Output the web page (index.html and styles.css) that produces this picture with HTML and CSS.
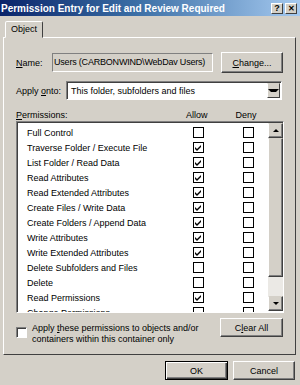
FILE: index.html
```html
<!DOCTYPE html>
<html lang="en">
<head>
    <meta charset="UTF-8">
    <title>Permission Entry for Edit and Review Required</title>
    <link rel="stylesheet" href="styles.css">
</head>
<body>
    <div class="window">
        <div class="titlebar">
            <span class="title">Permission Entry for Edit and Review Required</span>
            <span class="capbtn">?</span>
            <span class="capbtn close">&#x2715;</span>
        </div>

        <div class="tabs">
            <div class="tab">Object</div>
        </div>

        <div class="panel">
            <div class="row name-row">
                <span class="label"><u>N</u>ame:</span>
                <div class="field">Users (CARBONWIND\WebDav Users)</div>
                <button class="btn change"><u>C</u>hange...</button>
            </div>

            <div class="row apply-row">
                <span class="label">Apply <u>o</u>nto:</span>
                <div class="combo">
                    <span>This folder, subfolders and files</span>
                    <span class="combo-arrow"><span class="tri down"></span></span>
                </div>
            </div>

            <div class="perm-head">
                <span class="label"><u>P</u>ermissions:</span>
                <span class="col-head allow">Allow</span>
                <span class="col-head deny">Deny</span>
            </div>

            <div class="listbox">
                <div class="list-items" id="items"></div>
                <div class="scrollbar">
                    <div class="sbtn"><span class="tri up"></span></div>
                    <div class="thumb"></div>
                    <div class="track"></div>
                    <div class="sbtn"><span class="tri down"></span></div>
                </div>
            </div>

            <div class="bottom-row">
                <div class="apply-only">
                    <span class="cb"></span>
                    <span class="apply-text">Apply <u>t</u>hese permissions to objects and/or containers within this container only</span>
                </div>
                <button class="btn clear">C<u>l</u>ear All</button>
            </div>
        </div>

        <div class="footer">
            <button class="btn ok">OK</button>
            <button class="btn cancel">Cancel</button>
        </div>
    </div>

    <script>
        const perms = [
            ['Full Control', false, false],
            ['Traverse Folder / Execute File', true, false],
            ['List Folder / Read Data', true, false],
            ['Read Attributes', true, false],
            ['Read Extended Attributes', true, false],
            ['Create Files / Write Data', true, false],
            ['Create Folders / Append Data', true, false],
            ['Write Attributes', true, false],
            ['Write Extended Attributes', true, false],
            ['Delete Subfolders and Files', false, false],
            ['Delete', false, false],
            ['Read Permissions', true, false],
            ['Change Permissions', false, false]
        ];
        const items = document.getElementById('items');
        const check = '<svg width="7" height="7" viewBox="0 0 7 7"><path d="M0 3 L2 5 L6 1 L6 3 L2 7 L0 5 Z" fill="#000"/></svg>';
        perms.forEach(p => {
            const row = document.createElement('div');
            row.className = 'item';
            row.innerHTML = `<span class="item-name">${p[0]}</span>` +
                `<span class="box allow-box">${p[1] ? check : ''}</span>` +
                `<span class="box deny-box">${p[2] ? check : ''}</span>`;
            items.appendChild(row);
        });
    </script>
</body>
</html>
```

FILE: styles.css
```css
body, html {
    margin: 0;
    padding: 0;
    width: 300px;
    height: 385px;
    overflow: hidden;
    font-family: "Liberation Sans", Arial, sans-serif;
    font-size: 9px;
    color: #000;
}
.window {
    width: 300px;
    height: 385px;
    background-color: #d4d0c8;
    display: flex;
    flex-direction: column;
}
.titlebar {
    height: 16px;
    display: flex;
    align-items: center;
    padding: 0 3px 0 1px;
    background: linear-gradient(to right, #0a246a 0%, #3a6ea5 45%, #a6caf0 100%);
}
.title {
    flex: 1;
    color: #fff;
    font-weight: bold;
    font-size: 10px;
    white-space: nowrap;
}
.capbtn {
    width: 12px;
    height: 11px;
    box-sizing: border-box;
    background-color: #d4d0c8;
    border: 1px solid;
    border-color: #fff #404040 #404040 #fff;
    font-size: 9px;
    font-weight: bold;
    line-height: 9px;
    text-align: center;
    margin-left: 1px;
}
.capbtn.close {
    margin-left: 2px;
    font-size: 8px;
}
.tabs {
    display: flex;
    padding: 5px 0 0 5px;
    height: 16px;
}
.tab {
    width: 38px;
    box-sizing: border-box;
    border: 1px solid;
    border-color: #fff #404040 transparent #fff;
    border-radius: 2px 2px 0 0;
    text-align: center;
    line-height: 14px;
    background-color: #d4d0c8;
    position: relative;
    z-index: 1;
    margin-bottom: -1px;
}
.panel {
    height: 318px;
    margin: 0 4px 0 3px;
    box-sizing: border-box;
    border: 1px solid;
    border-color: #fff #404040 #404040 #fff;
    padding: 14px 12px 0 12px;
    display: flex;
    flex-direction: column;
}
.row {
    display: flex;
    align-items: center;
}
.name-row {
    height: 21px;
}
.label {
    white-space: nowrap;
}
.name-row .label {
    width: 36px;
}
.field {
    width: 161px;
    height: 19px;
    box-sizing: border-box;
    border: 1px solid;
    border-color: #808080 #fff #fff #808080;
    background-color: #d4d0c8;
    line-height: 17px;
    padding-left: 1px;
    white-space: nowrap;
    overflow: hidden;
    letter-spacing: -0.2px;
}
.btn {
    font-family: "Liberation Sans", Arial, sans-serif;
    font-size: 9px;
    color: #000;
    background-color: #d4d0c8;
    border: 1px solid;
    border-color: #fff #404040 #404040 #fff;
    box-shadow: inset -1px -1px 0 #808080;
    padding: 0;
    box-sizing: border-box;
}
.change {
    width: 62px;
    height: 21px;
    margin-left: 8px;
}
.apply-row {
    height: 19px;
    margin-top: 8px;
}
.apply-row .label {
    width: 50px;
}
.combo {
    width: 216px;
    height: 19px;
    box-sizing: border-box;
    border: 1px solid;
    border-color: #808080 #fff #fff #808080;
    box-shadow: inset 1px 1px 0 #404040;
    background-color: #fff;
    display: flex;
    align-items: center;
    padding: 0 1px 0 4px;
}
.combo span:first-child {
    flex: 1;
}
.combo-arrow {
    width: 13px;
    height: 15px;
    box-sizing: border-box;
    background-color: #d4d0c8;
    border: 1px solid;
    border-color: #d4d0c8 #404040 #404040 #fff;
    display: flex;
    align-items: center;
    justify-content: center;
}
.tri {
    width: 0;
    height: 0;
    border-left: 3px solid transparent;
    border-right: 3px solid transparent;
}
.tri.down {
    border-top: 3px solid #000;
}
.tri.up {
    border-bottom: 3px solid #000;
}
.perm-head {
    display: flex;
    margin-top: 9px;
    height: 12px;
    line-height: 12px;
}
.perm-head .label {
    width: 170px;
}
.col-head.deny {
    margin-left: 28px;
}
.listbox {
    height: 192px;
    width: 268px;
    box-sizing: border-box;
    border: 1px solid;
    border-color: #808080 #fff #fff #808080;
    box-shadow: inset 1px 1px 0 #404040;
    background-color: #fff;
    display: flex;
    overflow: hidden;
}
.list-items {
    flex: 1;
    padding-top: 3px;
    padding-left: 10px;
}
.item {
    height: 15px;
    display: flex;
    align-items: center;
}
.item-name {
    width: 166px;
}
.box {
    width: 11px;
    height: 11px;
    box-sizing: border-box;
    border: 1px solid #000;
    display: flex;
    align-items: center;
    justify-content: center;
}
.deny-box {
    margin-left: 39px;
}
.scrollbar {
    width: 15px;
    display: flex;
    flex-direction: column;
    padding: 1px 0 1px 0;
}
.sbtn {
    height: 15px;
    box-sizing: border-box;
    background-color: #d4d0c8;
    border: 1px solid;
    border-color: #d4d0c8 #404040 #404040 #fff;
    box-shadow: inset -1px -1px 0 #808080;
    display: flex;
    align-items: center;
    justify-content: center;
}
.thumb {
    height: 139px;
    box-sizing: border-box;
    background-color: #d4d0c8;
    border: 1px solid;
    border-color: #d4d0c8 #404040 #404040 #fff;
    box-shadow: inset -1px -1px 0 #808080;
}
.track {
    flex: 1;
    background-color: #ebe9e5;
}
.bottom-row {
    display: flex;
    justify-content: space-between;
    margin-top: 5px;
}
.apply-only {
    display: flex;
    margin-top: 5px;
}
.cb {
    width: 11px;
    height: 11px;
    box-sizing: border-box;
    border: 1px solid;
    border-color: #808080 #fff #fff #808080;
    box-shadow: inset 1px 1px 0 #404040;
    background-color: #fff;
    margin-top: 4px;
}
.apply-text {
    width: 170px;
    margin-left: 5px;
    line-height: 11px;
}
.clear {
    width: 63px;
    height: 19px;
}
.footer {
    display: flex;
    justify-content: flex-end;
    padding: 6px 5px 0 0;
}
.ok {
    width: 63px;
    height: 19px;
    border: 1px solid #000;
    box-shadow: inset 1px 1px 0 #fff, inset -1px -1px 0 #404040, inset -2px -2px 0 #808080;
}
.cancel {
    width: 62px;
    height: 19px;
    margin-left: 5px;
}
```
